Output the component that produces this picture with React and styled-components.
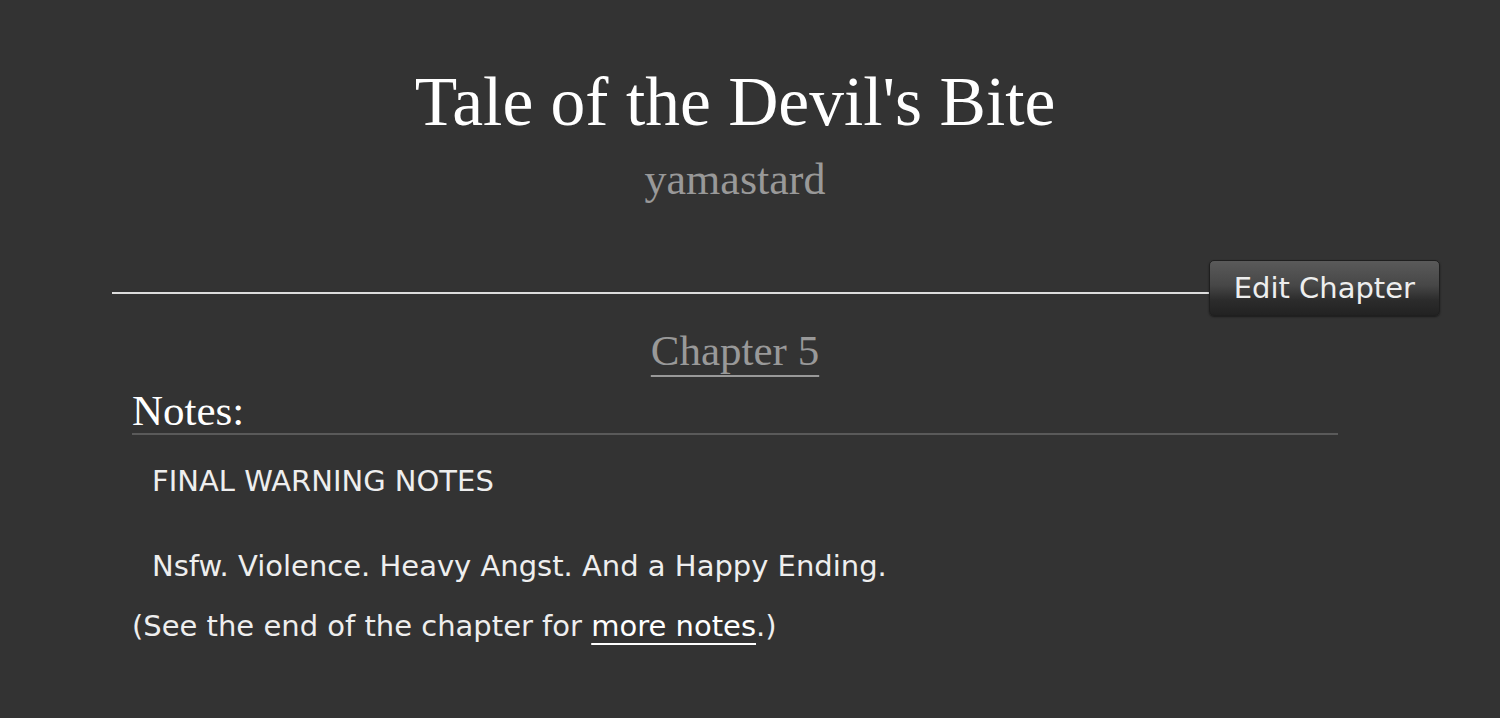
import React from "react";
import styled, { createGlobalStyle } from "styled-components";

const Global = createGlobalStyle`
  html, body { margin: 0; padding: 0; background: #333333; }
  body { font-family: "DejaVu Sans", "Open Sans", sans-serif; color: #eeeeee; }
  * { box-sizing: border-box; }
`;

const Page = styled.div`
  min-height: 718px;
  background: #333333;
  padding: 62px 60px 0 112px;
`;

const Preface = styled.div`
  width: 1246px;
  display: flex;
  flex-direction: column;
  align-items: center;
`;

const Title = styled.h2`
  margin: 0;
  font-family: "Liberation Serif", "DejaVu Serif", serif;
  font-weight: normal;
  font-size: 69.5px;
  line-height: 80px;
  color: #ffffff;
`;

const Byline = styled.h3`
  margin: 14px 0 0;
  font-family: "Liberation Serif", "DejaVu Serif", serif;
  font-weight: normal;
  font-size: 44px;
  line-height: 48px;
  color: #999999;
`;

const ChapterBar = styled.div`
  width: 1328px;
  margin-top: 56px;
  display: flex;
  align-items: center;
`;

const Rule = styled.div`
  flex: 1;
  height: 2px;
  margin-top: 10px;
  background: #dddddd;
`;

const Button = styled.button`
  height: 56px;
  padding: 0 24px;
  border: 1px solid #1f1f1f;
  border-radius: 5px;
  background: linear-gradient(to bottom, #5a5a5a 0%, #474747 45%, #2c2c2c 72%, #222 100%);
  color: #eeeeee;
  font-family: "DejaVu Sans", "Open Sans", sans-serif;
  font-size: 29px;
  box-shadow: 0 1px 2px rgba(0,0,0,0.5);
  cursor: pointer;
`;

const ChapterTitle = styled.h3`
  width: 1246px;
  margin: 11px 0 0;
  text-align: center;
  font-family: "Liberation Serif", "DejaVu Serif", serif;
  font-weight: normal;
  font-size: 43px;
  line-height: 48px;
  a { color: #999999; text-decoration: underline; text-underline-offset: 10px; text-decoration-thickness: 2px; }
`;

const Notes = styled.div`
  width: 1246px;
  padding: 0 20px;
`;

const NotesHeading = styled.h3`
  margin: 14px 0 0;
  font-family: "Liberation Serif", "DejaVu Serif", serif;
  font-weight: normal;
  font-size: 43px;
  line-height: 44px;
  color: #ffffff;
  border-bottom: 2px solid #5a5a5a;
`;

const Quote = styled.blockquote`
  margin: 0;
  padding: 0 20px;
`;

const Para = styled.p`
  margin: ${(p) => p.$mt || 0}px 0 0;
  font-size: 29px;
  line-height: 40px;
  color: #eeeeee;
  a { color: #ffffff; text-decoration: underline; text-underline-offset: 7px; text-decoration-thickness: 2px; }
`;

export default function App() {
  return (
    <>
      <Global />
      <Page>
        <Preface>
          <Title>Tale of the Devil's Bite</Title>
          <Byline>yamastard</Byline>
        </Preface>
        <ChapterBar>
          <Rule />
          <Button>Edit Chapter</Button>
        </ChapterBar>
        <ChapterTitle>
          <a href="#">Chapter 5</a>
        </ChapterTitle>
        <Notes>
          <NotesHeading>Notes:</NotesHeading>
          <Quote>
            <Para $mt={26}>FINAL WARNING NOTES</Para>
            <Para $mt={45}>Nsfw. Violence. Heavy Angst. And a Happy Ending.</Para>
          </Quote>
          <Para $mt={20}>
            (See the end of the chapter for <a href="#">more notes</a>.)
          </Para>
        </Notes>
      </Page>
    </>
  );
}
